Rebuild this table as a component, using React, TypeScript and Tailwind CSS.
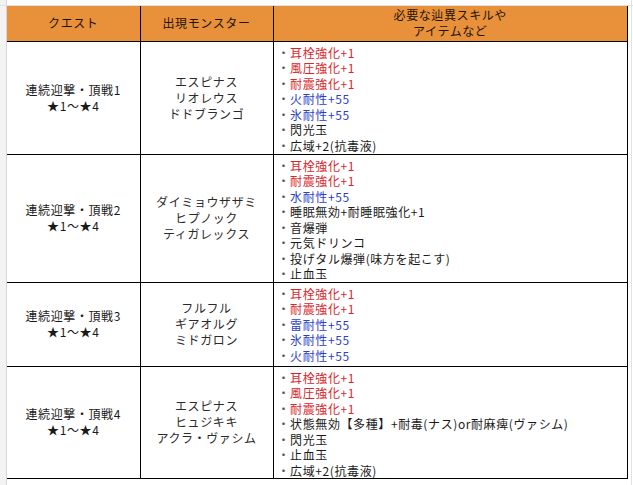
import React from 'react';

type Item = { text: string; color?: 'red' | 'blue' };

interface Row {
  quest: string;
  monsters: string[];
  items: Item[];
  height: number;
}

const rows: Row[] = [
  {
    quest: '連続迎撃・頂戦1',
    monsters: ['エスピナス', 'リオレウス', 'ドドブランゴ'],
    height: 113,
    items: [
      { text: '耳栓強化+1', color: 'red' },
      { text: '風圧強化+1', color: 'red' },
      { text: '耐震強化+1', color: 'red' },
      { text: '火耐性+55', color: 'blue' },
      { text: '氷耐性+55', color: 'blue' },
      { text: '閃光玉' },
      { text: '広域+2(抗毒液)' },
    ],
  },
  {
    quest: '連続迎撃・頂戦2',
    monsters: ['ダイミョウザザミ', 'ヒプノック', 'ティガレックス'],
    height: 128,
    items: [
      { text: '耳栓強化+1', color: 'red' },
      { text: '耐震強化+1', color: 'red' },
      { text: '水耐性+55', color: 'blue' },
      { text: '睡眠無効+耐睡眠強化+1' },
      { text: '音爆弾' },
      { text: '元気ドリンコ' },
      { text: '投げタル爆弾(味方を起こす)' },
      { text: '止血玉' },
    ],
  },
  {
    quest: '連続迎撃・頂戦3',
    monsters: ['フルフル', 'ギアオルグ', 'ミドガロン'],
    height: 84,
    items: [
      { text: '耳栓強化+1', color: 'red' },
      { text: '耐震強化+1', color: 'red' },
      { text: '雷耐性+55', color: 'blue' },
      { text: '氷耐性+55', color: 'blue' },
      { text: '火耐性+55', color: 'blue' },
    ],
  },
  {
    quest: '連続迎撃・頂戦4',
    monsters: ['エスピナス', 'ヒュジキキ', 'アクラ・ヴァシム'],
    height: 112,
    items: [
      { text: '耳栓強化+1', color: 'red' },
      { text: '風圧強化+1', color: 'red' },
      { text: '耐震強化+1', color: 'red' },
      { text: '状態無効【多種】+耐毒(ナス)or耐麻痺(ヴァシム)' },
      { text: '閃光玉' },
      { text: '止血玉' },
      { text: '広域+2(抗毒液)' },
    ],
  },
];

function ItemLine({ item }: { item: Item }) {
  const color =
    item.color === 'red'
      ? 'text-[#d9262c]'
      : item.color === 'blue'
      ? 'text-[#2b3fc9]'
      : 'text-[#1a1a1a]';
  return (
    <div className={color + ' whitespace-nowrap'}>
      <span className="text-[#555]">・</span>
      {item.text}
    </div>
  );
}

export default function App() {
  return (
    <div
      className="relative w-[633px] h-[485px] bg-white overflow-hidden text-[12px] tracking-[0.6px] text-[#1a1a1a]"
      style={{ fontFamily: '"Noto Sans CJK JP", "Liberation Sans", sans-serif' }}
    >
      {/* spreadsheet gutter lines */}
      <div className="absolute left-0 top-0 w-[7px] h-full bg-[#f3f3f3]" />
      <div className="absolute left-[6px] top-0 h-full w-px bg-[#d6d6d6]" />
      <div className="absolute left-0 top-[5px] w-full h-px bg-[#e2e2e2]" />
      <div className="absolute left-[631px] top-0 h-full w-px bg-[#e2e2e2]" />

      <div className="relative pl-[7px] pt-[6px]">
        <table className="table-fixed border-collapse w-[621px]">
          <colgroup>
            <col className="w-[133px]" />
            <col className="w-[133px]" />
            <col />
          </colgroup>
          <thead>
            <tr className="h-[35px] bg-[#e8913a] text-[#1f1308]">
              <th className="font-normal border border-black border-t-0 border-l-0 leading-[16px]">
                クエスト
              </th>
              <th className="font-normal border border-black border-t-0 leading-[16px]">
                出現モンスター
              </th>
              <th className="font-normal border border-black border-t-0 leading-[16px]">
                必要な辿異スキルや
                <br />
                アイテムなど
              </th>
            </tr>
          </thead>
          <tbody>
            {rows.map((r) => (
              <tr key={r.quest} style={{ height: r.height }}>
                <td className="border border-black border-l-0 text-center align-middle leading-[16px]">
                  <div>{r.quest}</div>
                  <div>★1～★4</div>
                </td>
                <td className="border border-black text-center align-middle leading-[16px] text-[#2a2a2a]">
                  {r.monsters.map((m) => (
                    <div key={m}>{m}</div>
                  ))}
                </td>
                <td className="border border-black align-top pl-[4px] pt-[3px] leading-[15.5px]">
                  {r.items.map((it, i) => (
                    <ItemLine key={i} item={it} />
                  ))}
                </td>
              </tr>
            ))}
          </tbody>
        </table>
      </div>
    </div>
  );
}
